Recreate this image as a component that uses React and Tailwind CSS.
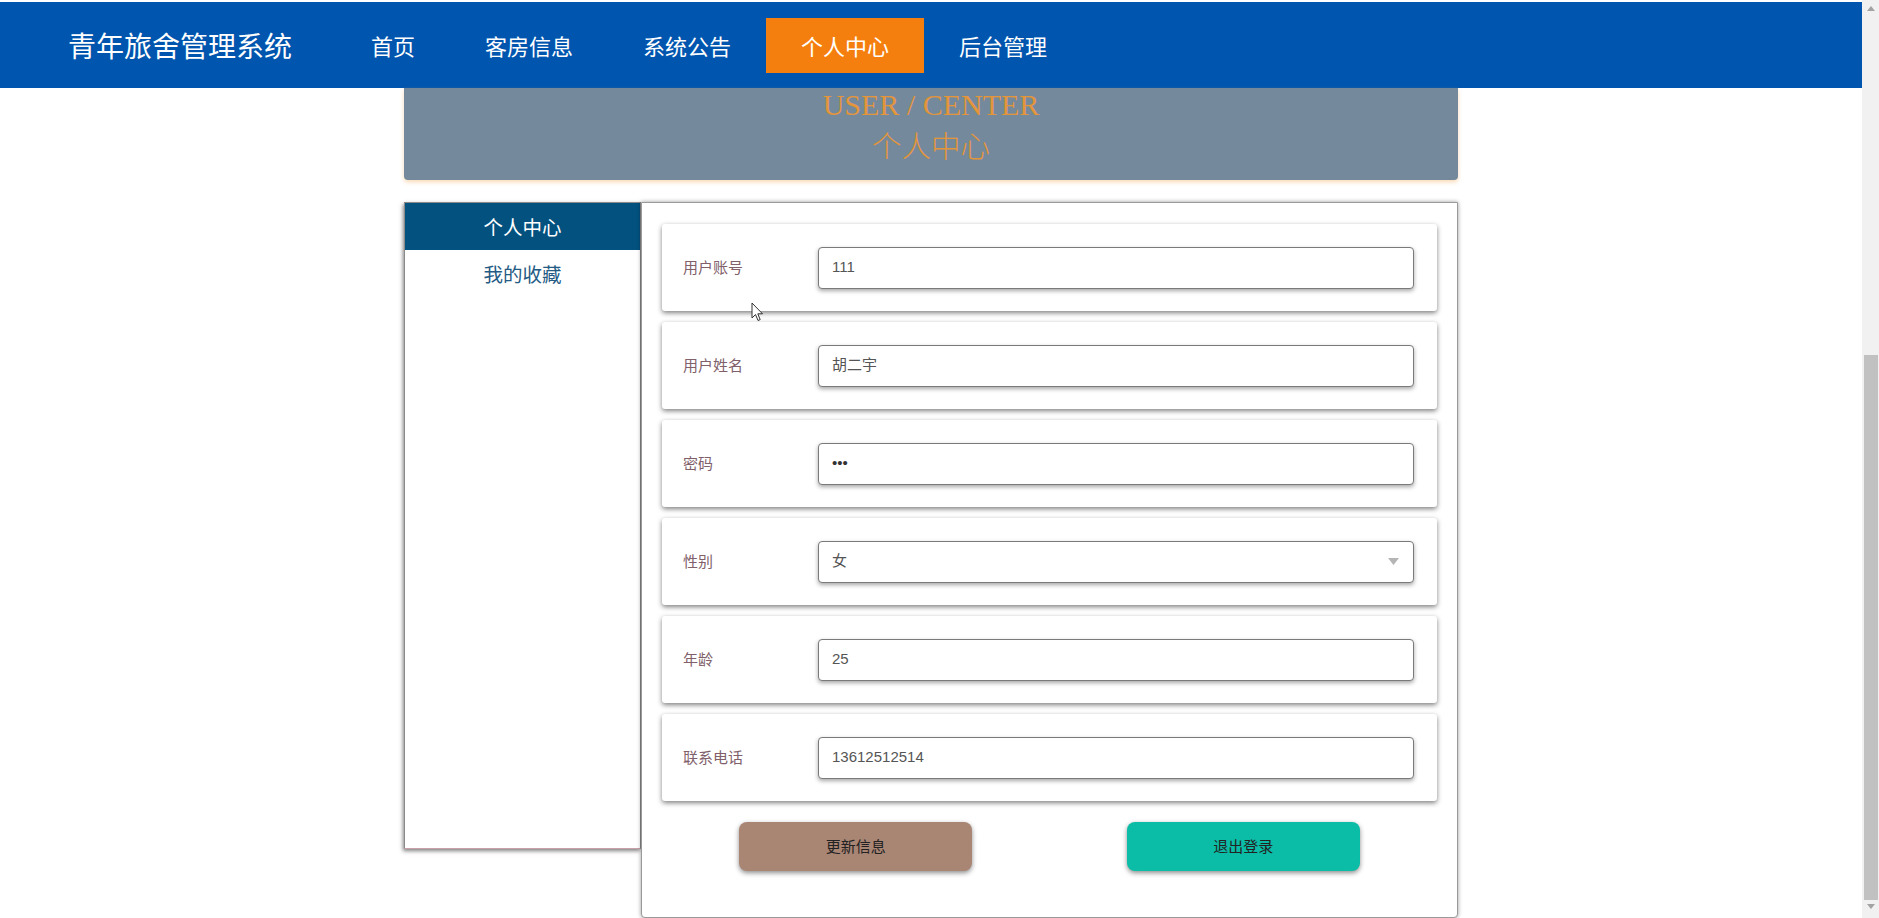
import { useState } from "react";

const navItems = ["首页", "客房信息", "系统公告", "个人中心", "后台管理"];

const fields = [
  { label: "用户账号", value: "111" },
  { label: "用户姓名", value: "胡二宇" },
  { label: "密码", value: "•••", password: true },
  { label: "性别", value: "女", select: true },
  { label: "年龄", value: "25" },
  { label: "联系电话", value: "13612512514" },
];

function FormRow({ field }) {
  return (
    <div className="flex h-[87px] items-center rounded-[3px] bg-white pl-[21px] pr-[23px] shadow-[0_2px_5px_rgba(0,0,0,0.5)]">
      <div className="w-[135px] text-[15px] text-[#80606a]">{field.label}</div>
      <div className="flex h-[42px] flex-1 items-center justify-between rounded-[4px] border border-[#7a7a7a] bg-white px-[13px] font-['Liberation_Sans','Noto_Sans_CJK_SC',sans-serif] text-[15px] text-[#555] shadow-[0_2px_4px_rgba(0,0,0,0.35)]">
        <span className={field.password ? "text-[#333]" : ""}>{field.value}</span>
        {field.select && (
          <svg width="11" height="7" viewBox="0 0 11 7" className="mr-[1px]">
            <polygon points="0,0 11,0 5.5,7" fill="#b5b5b5" />
          </svg>
        )}
      </div>
    </div>
  );
}

export default function App() {
  const [active, setActive] = useState("个人中心");
  const [menu, setMenu] = useState("个人中心");

  return (
    <div className="relative flex h-[918px] w-full overflow-hidden bg-white font-['Noto_Sans_CJK_SC',sans-serif]">
      <div className="flex min-w-0 flex-1 flex-col">
        <header className="flex h-[88px] shrink-0 items-center border-t-2 border-white bg-[#0055ae] pl-[68px]">
          <div className="mr-[44px] text-[28px] text-white">青年旅舍管理系统</div>
          <nav className="flex items-center">
            {navItems.map((item) => (
              <div
                key={item}
                onClick={() => setActive(item)}
                className={
                  item === active
                    ? "flex h-[55px] cursor-pointer items-center bg-[#f57f0e] px-[35px] text-[22px] text-white"
                    : "flex h-[55px] cursor-pointer items-center px-[35px] text-[22px] text-white"
                }
              >
                {item}
              </div>
            ))}
          </nav>
        </header>

        <div className="mx-auto flex h-[92px] w-[1054px] shrink-0 flex-col items-center rounded-b-[4px] bg-[#748a9c] text-[#e3953c] shadow-[0_2px_4px_rgba(240,170,90,0.45)]">
          <div className="font-['Liberation_Serif',serif] text-[30px] leading-[34px]">USER / CENTER</div>
          <div className="font-['Liberation_Serif','Noto_Sans_CJK_SC',serif] text-[29.5px] font-light leading-[50px]">个人中心</div>
        </div>

        <div className="mx-auto mt-[22px] flex w-[1054px] items-start">
          <aside className="h-[647px] w-[237px] shrink-0 border border-[#8a8a8a] border-b-[#c9a0a8] bg-white shadow-[-1px_2px_4px_rgba(0,0,0,0.5)]">
            {["个人中心", "我的收藏"].map((m) => (
              <div
                key={m}
                onClick={() => setMenu(m)}
                className={
                  m === menu
                    ? "flex h-[47px] cursor-pointer items-center justify-center bg-[#02517f] text-[19.5px] text-white"
                    : "flex h-[47px] cursor-pointer items-center justify-center text-[19.5px] text-[#245b84]"
                }
              >
                {m}
              </div>
            ))}
          </aside>

          <section className="flex-1 rounded-b-[4px] border border-[#9a9a9a] bg-white px-[20px] pb-[46px] pt-[21px] shadow-[0_0_4px_rgba(0,0,0,0.4)]">
            <div className="flex flex-col gap-[11px]">
              {fields.map((f) => (
                <FormRow key={f.label} field={f} />
              ))}
            </div>
            <div className="mt-[21px] flex justify-around">
              <button className="h-[49px] w-[233px] rounded-[8px] bg-[#a98574] text-[15px] text-[#222] shadow-[0_2px_5px_rgba(0,0,0,0.45)]">
                更新信息
              </button>
              <button className="h-[49px] w-[233px] rounded-[8px] bg-[#0bbda6] text-[15px] text-[#222] shadow-[0_2px_5px_rgba(0,0,0,0.45)]">
                退出登录
              </button>
            </div>
          </section>
        </div>
      </div>

      <div className="flex w-[17px] shrink-0 flex-col items-center bg-[#f1f1f1]">
        <svg width="8" height="5" viewBox="0 0 8 5" className="mt-[6px]">
          <polygon points="4,0 8,5 0,5" fill="#a3a3a3" />
        </svg>
        <div className="mt-[344px] h-[545px] w-[14px] bg-[#c1c1c1]" />
        <svg width="8" height="5" viewBox="0 0 8 5" className="mt-[4px]">
          <polygon points="0,0 8,0 4,5" fill="#a3a3a3" />
        </svg>
      </div>

      <svg width="13" height="20" viewBox="0 0 13 20" className="absolute left-[751px] top-[302px]">
        <path d="M1 1 L1 16 L4.5 12.5 L7 18.5 L9.2 17.6 L6.8 11.8 L11.5 11.8 Z" fill="#fff" stroke="#333" strokeWidth="1" strokeLinejoin="round" />
      </svg>
    </div>
  );
}
